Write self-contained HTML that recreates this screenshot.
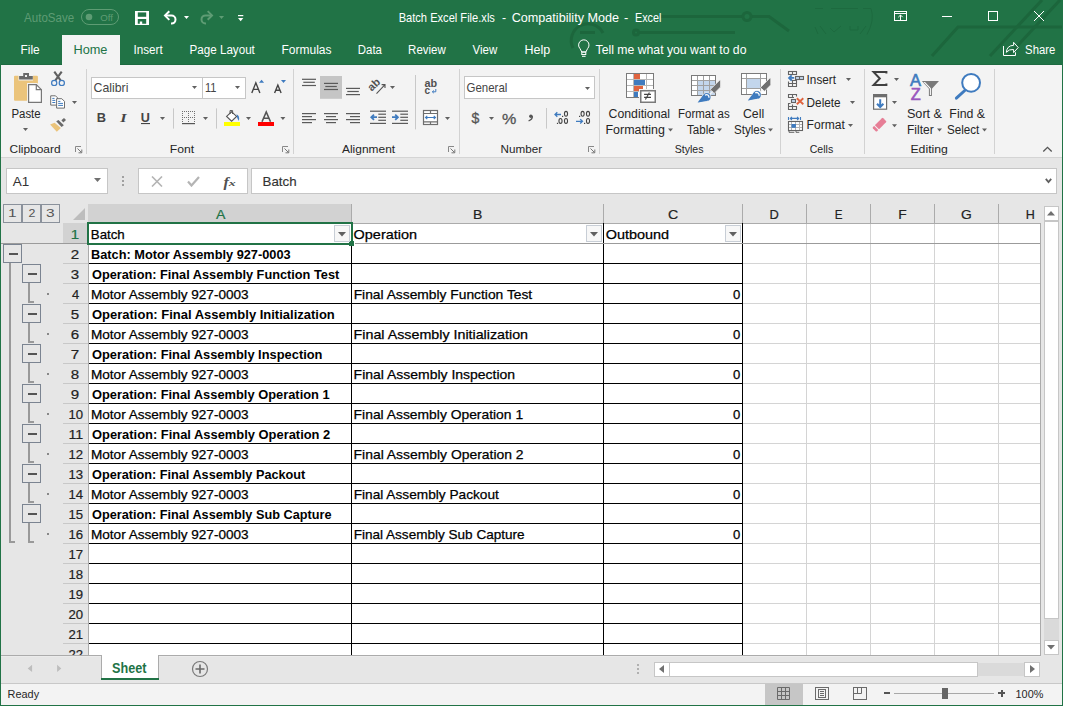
<!DOCTYPE html>
<html><head><meta charset='utf-8'><style>
html,body{margin:0;padding:0;width:1065px;height:708px;overflow:hidden;background:#fff}
#c{position:relative;width:1065px;height:708px;overflow:hidden;font-family:"Liberation Sans",sans-serif}
#c>*{position:absolute;box-sizing:content-box}
</style></head><body><div id='c'>
<div style='left:0px;top:0px;width:1065px;height:708px;background:#FFFFFF;'></div>
<div style='left:0px;top:0px;width:1063px;height:65px;background:#217346;'></div>
<div style='left:0px;top:64px;width:1063px;height:1px;background:#1D6A40;'></div>
<svg style='left:0;top:0' width='1063' height='64'><g stroke='#1C663C' fill='none' stroke-width='3'><path d='M661 16.5 H743 M751 16.5 H769 L789 31'/><circle cx='747' cy='16.5' r='4'/><path d='M639 32.5 H735'/><circle cx='636' cy='32.5' r='2.5'/><path d='M573 48 A16 16 0 0 1 603 33'/><path d='M580 32.5H595'/><path d='M932 56 L958 27 H1062'/><path d='M1042 0 L990 56'/><path d='M1060 0 L1008 56'/></g><g stroke='#1D6A3F' fill='none' stroke-width='1'><path d='M815 8.5H823M831 8.5H858M863 8.5H871Q875 20 867 34.5'/><path d='M815 27L818 34M820 26L826 34M830 28L834 32L841 26M850 26V30H858V26M866 26L860 34'/></g></svg>
<div style='left:62px;top:35px;width:58px;height:30px;background:#F3F3F3;'></div>
<div style='left:1px;top:65px;width:1061px;height:92px;background:#F3F3F3;'></div>
<div style='left:1px;top:157px;width:1061px;height:1px;background:#D4D4D4;'></div>
<div style='left:1px;top:158px;width:1061px;height:46px;background:#E6E6E6;'></div>
<div style='left:0px;top:0px;width:1px;height:706px;background:#217346;'></div>
<div style='left:1062px;top:0px;width:1px;height:706px;background:#217346;'></div>
<div style='left:0px;top:705px;width:1063px;height:1px;background:#217346;'></div>
<div style='left:6px;top:168px;width:100px;height:24px;background:#FFFFFF;border:1px solid #C6C6C6;'></div>
<svg style='left:94px;top:178px' width='8' height='5'><path d='M0 0H7L3.5 4Z' fill='#707070'/></svg>
<div style='left:122px;top:176px;width:2px;height:2px;background:#A0A0A0;'></div>
<div style='left:122px;top:180px;width:2px;height:2px;background:#A0A0A0;'></div>
<div style='left:122px;top:184px;width:2px;height:2px;background:#A0A0A0;'></div>
<div style='left:138px;top:168px;width:108px;height:24px;background:#FFFFFF;border:1px solid #C6C6C6;'></div>
<div style='left:251px;top:168px;width:804px;height:24px;background:#FFFFFF;border:1px solid #C6C6C6;'></div>
<svg style='left:151px;top:176px' width='12' height='11'><path d='M1 0.5L11 10.5M11 0.5L1 10.5' stroke='#B4B4B4' stroke-width='1.6'/></svg>
<svg style='left:187px;top:176px' width='13' height='11'><path d='M1 5.5L4.5 9.5L12 1' stroke='#B4B4B4' stroke-width='2.2' fill='none'/></svg>
<svg style='left:1045px;top:178px' width='8' height='6'><path d='M0.8 0.8L3.5 4L6.2 0.8' stroke='#606060' stroke-width='1.8' fill='none'/></svg>
<div style='left:1px;top:204px;width:1061px;height:451px;background:#E6E6E6;'></div>
<div style='left:88px;top:223px;width:952px;height:432px;background:#FFFFFF;'></div>
<div style='left:88px;top:204px;width:263px;height:18px;background:#D2D2D2;'></div>
<div style='left:63px;top:223px;width:25px;height:20px;background:#D2D2D2;'></div>
<div style='left:351px;top:204px;width:1px;height:19px;background:#ABABAB;'></div>
<div style='left:603px;top:204px;width:1px;height:19px;background:#ABABAB;'></div>
<div style='left:742px;top:204px;width:1px;height:19px;background:#ABABAB;'></div>
<div style='left:806px;top:204px;width:1px;height:19px;background:#ABABAB;'></div>
<div style='left:870px;top:204px;width:1px;height:19px;background:#ABABAB;'></div>
<div style='left:934px;top:204px;width:1px;height:19px;background:#ABABAB;'></div>
<div style='left:998px;top:204px;width:1px;height:19px;background:#ABABAB;'></div>
<div style='left:88px;top:223px;width:952px;height:1px;background:#ABABAB;'></div>
<div style='left:88px;top:223px;width:1px;height:432px;background:#ABABAB;'></div>
<div style='left:742px;top:224px;width:1px;height:431px;background:#D4D4D4;'></div>
<div style='left:806px;top:224px;width:1px;height:431px;background:#D4D4D4;'></div>
<div style='left:870px;top:224px;width:1px;height:431px;background:#D4D4D4;'></div>
<div style='left:934px;top:224px;width:1px;height:431px;background:#D4D4D4;'></div>
<div style='left:998px;top:224px;width:1px;height:431px;background:#D4D4D4;'></div>
<div style='left:89px;top:263px;width:951px;height:1px;background:#D4D4D4;'></div>
<div style='left:63px;top:263px;width:25px;height:1px;background:#C8C8C8;'></div>
<div style='left:89px;top:283px;width:951px;height:1px;background:#D4D4D4;'></div>
<div style='left:63px;top:283px;width:25px;height:1px;background:#C8C8C8;'></div>
<div style='left:89px;top:303px;width:951px;height:1px;background:#D4D4D4;'></div>
<div style='left:63px;top:303px;width:25px;height:1px;background:#C8C8C8;'></div>
<div style='left:89px;top:323px;width:951px;height:1px;background:#D4D4D4;'></div>
<div style='left:63px;top:323px;width:25px;height:1px;background:#C8C8C8;'></div>
<div style='left:89px;top:343px;width:951px;height:1px;background:#D4D4D4;'></div>
<div style='left:63px;top:343px;width:25px;height:1px;background:#C8C8C8;'></div>
<div style='left:89px;top:363px;width:951px;height:1px;background:#D4D4D4;'></div>
<div style='left:63px;top:363px;width:25px;height:1px;background:#C8C8C8;'></div>
<div style='left:89px;top:383px;width:951px;height:1px;background:#D4D4D4;'></div>
<div style='left:63px;top:383px;width:25px;height:1px;background:#C8C8C8;'></div>
<div style='left:89px;top:403px;width:951px;height:1px;background:#D4D4D4;'></div>
<div style='left:63px;top:403px;width:25px;height:1px;background:#C8C8C8;'></div>
<div style='left:89px;top:423px;width:951px;height:1px;background:#D4D4D4;'></div>
<div style='left:63px;top:423px;width:25px;height:1px;background:#C8C8C8;'></div>
<div style='left:89px;top:443px;width:951px;height:1px;background:#D4D4D4;'></div>
<div style='left:63px;top:443px;width:25px;height:1px;background:#C8C8C8;'></div>
<div style='left:89px;top:463px;width:951px;height:1px;background:#D4D4D4;'></div>
<div style='left:63px;top:463px;width:25px;height:1px;background:#C8C8C8;'></div>
<div style='left:89px;top:483px;width:951px;height:1px;background:#D4D4D4;'></div>
<div style='left:63px;top:483px;width:25px;height:1px;background:#C8C8C8;'></div>
<div style='left:89px;top:503px;width:951px;height:1px;background:#D4D4D4;'></div>
<div style='left:63px;top:503px;width:25px;height:1px;background:#C8C8C8;'></div>
<div style='left:89px;top:523px;width:951px;height:1px;background:#D4D4D4;'></div>
<div style='left:63px;top:523px;width:25px;height:1px;background:#C8C8C8;'></div>
<div style='left:89px;top:543px;width:951px;height:1px;background:#D4D4D4;'></div>
<div style='left:63px;top:543px;width:25px;height:1px;background:#C8C8C8;'></div>
<div style='left:89px;top:563px;width:951px;height:1px;background:#D4D4D4;'></div>
<div style='left:63px;top:563px;width:25px;height:1px;background:#C8C8C8;'></div>
<div style='left:89px;top:583px;width:951px;height:1px;background:#D4D4D4;'></div>
<div style='left:63px;top:583px;width:25px;height:1px;background:#C8C8C8;'></div>
<div style='left:89px;top:603px;width:951px;height:1px;background:#D4D4D4;'></div>
<div style='left:63px;top:603px;width:25px;height:1px;background:#C8C8C8;'></div>
<div style='left:89px;top:623px;width:951px;height:1px;background:#D4D4D4;'></div>
<div style='left:63px;top:623px;width:25px;height:1px;background:#C8C8C8;'></div>
<div style='left:89px;top:643px;width:951px;height:1px;background:#D4D4D4;'></div>
<div style='left:63px;top:643px;width:25px;height:1px;background:#C8C8C8;'></div>
<div style='left:89px;top:663px;width:951px;height:1px;background:#D4D4D4;'></div>
<div style='left:63px;top:663px;width:25px;height:1px;background:#C8C8C8;'></div>
<div style='left:1040px;top:223px;width:1px;height:433px;background:#ABABAB;'></div>
<div style='left:89px;top:263px;width:654px;height:1px;background:#000000;'></div>
<div style='left:89px;top:283px;width:654px;height:1px;background:#000000;'></div>
<div style='left:89px;top:303px;width:654px;height:1px;background:#000000;'></div>
<div style='left:89px;top:323px;width:654px;height:1px;background:#000000;'></div>
<div style='left:89px;top:343px;width:654px;height:1px;background:#000000;'></div>
<div style='left:89px;top:363px;width:654px;height:1px;background:#000000;'></div>
<div style='left:89px;top:383px;width:654px;height:1px;background:#000000;'></div>
<div style='left:89px;top:403px;width:654px;height:1px;background:#000000;'></div>
<div style='left:89px;top:423px;width:654px;height:1px;background:#000000;'></div>
<div style='left:89px;top:443px;width:654px;height:1px;background:#000000;'></div>
<div style='left:89px;top:463px;width:654px;height:1px;background:#000000;'></div>
<div style='left:89px;top:483px;width:654px;height:1px;background:#000000;'></div>
<div style='left:89px;top:503px;width:654px;height:1px;background:#000000;'></div>
<div style='left:89px;top:523px;width:654px;height:1px;background:#000000;'></div>
<div style='left:89px;top:543px;width:654px;height:1px;background:#000000;'></div>
<div style='left:89px;top:563px;width:654px;height:1px;background:#000000;'></div>
<div style='left:89px;top:583px;width:654px;height:1px;background:#000000;'></div>
<div style='left:89px;top:603px;width:654px;height:1px;background:#000000;'></div>
<div style='left:89px;top:623px;width:654px;height:1px;background:#000000;'></div>
<div style='left:89px;top:643px;width:654px;height:1px;background:#000000;'></div>
<div style='left:89px;top:663px;width:654px;height:1px;background:#000000;'></div>
<div style='left:351px;top:223px;width:1px;height:432px;background:#000000;'></div>
<div style='left:603px;top:223px;width:1px;height:432px;background:#000000;'></div>
<div style='left:742px;top:223px;width:1px;height:432px;background:#000000;'></div>
<div style='left:1px;top:243px;width:1039px;height:1px;background:#9B9B9B;'></div>
<div style='left:87px;top:222px;width:266px;height:2px;background:#217346;'></div>
<div style='left:87px;top:243px;width:264px;height:2px;background:#217346;'></div>
<div style='left:87px;top:222px;width:2px;height:23px;background:#217346;'></div>
<div style='left:351px;top:222px;width:2px;height:21px;background:#217346;'></div>
<div style='left:349px;top:241px;width:5px;height:5px;background:#217346;'></div>
<div style='left:354px;top:243px;width:1px;height:1px;background:#FFFFFF;'></div>
<div style='left:334px;top:225px;width:14px;height:15px;background:#F7F7F7;border:1px solid #C8CED6;'></div>
<svg style='left:338px;top:232px' width='9' height='5'><path d='M0 0H8L4 4.5Z' fill='#606060'/></svg>
<div style='left:586px;top:225px;width:14px;height:15px;background:#F7F7F7;border:1px solid #C8CED6;'></div>
<svg style='left:590px;top:232px' width='9' height='5'><path d='M0 0H8L4 4.5Z' fill='#606060'/></svg>
<div style='left:725px;top:225px;width:14px;height:15px;background:#F7F7F7;border:1px solid #C8CED6;'></div>
<svg style='left:729px;top:232px' width='9' height='5'><path d='M0 0H8L4 4.5Z' fill='#606060'/></svg>
<div style='left:1044px;top:206px;width:13px;height:13px;background:#FFFFFF;border:1px solid #C6C6C6;'></div>
<svg style='left:1047px;top:211px' width='9' height='5'><path d='M0 4.5H8L4 0Z' fill='#707070'/></svg>
<div style='left:1044px;top:221px;width:13px;height:396px;background:#FFFFFF;border:1px solid #C6C6C6;'></div>
<div style='left:1044px;top:619px;width:15px;height:21px;background:#DADADA;'></div>
<div style='left:1044px;top:640px;width:13px;height:13px;background:#FFFFFF;border:1px solid #C6C6C6;'></div>
<svg style='left:1047px;top:645px' width='9' height='5'><path d='M0 0H8L4 4.5Z' fill='#707070'/></svg>
<div style='left:3px;top:204px;width:17px;height:17px;background:#E6E6E6;border:1px solid #8A919B;'></div>
<div style='left:22px;top:204px;width:17px;height:17px;background:#E6E6E6;border:1px solid #8A919B;'></div>
<div style='left:41px;top:204px;width:17px;height:17px;background:#E6E6E6;border:1px solid #8A919B;'></div>
<svg style='left:73px;top:208px' width='13' height='13'><path d='M12 0V12H0Z' fill='#BDBDBD'/></svg>
<div style='left:3px;top:244px;width:17px;height:17px;background:#E6E6E6;border:1px solid #7B8491;'></div>
<div style='left:9px;top:253px;width:9px;height:2px;background:#555555;'></div>
<div style='left:9px;top:263px;width:2px;height:280px;background:#999999;'></div>
<div style='left:9px;top:541px;width:6px;height:2px;background:#999999;'></div>
<div style='left:22px;top:264px;width:17px;height:17px;background:#E6E6E6;border:1px solid #7B8491;'></div>
<div style='left:28px;top:273px;width:9px;height:2px;background:#555555;'></div>
<div style='left:28px;top:283px;width:2px;height:20px;background:#999999;'></div>
<div style='left:28px;top:301px;width:6px;height:2px;background:#999999;'></div>
<div style='left:47px;top:293px;width:2px;height:2px;background:#888888;'></div>
<div style='left:22px;top:304px;width:17px;height:17px;background:#E6E6E6;border:1px solid #7B8491;'></div>
<div style='left:28px;top:313px;width:9px;height:2px;background:#555555;'></div>
<div style='left:28px;top:323px;width:2px;height:20px;background:#999999;'></div>
<div style='left:28px;top:341px;width:6px;height:2px;background:#999999;'></div>
<div style='left:47px;top:333px;width:2px;height:2px;background:#888888;'></div>
<div style='left:22px;top:344px;width:17px;height:17px;background:#E6E6E6;border:1px solid #7B8491;'></div>
<div style='left:28px;top:353px;width:9px;height:2px;background:#555555;'></div>
<div style='left:28px;top:363px;width:2px;height:20px;background:#999999;'></div>
<div style='left:28px;top:381px;width:6px;height:2px;background:#999999;'></div>
<div style='left:47px;top:373px;width:2px;height:2px;background:#888888;'></div>
<div style='left:22px;top:384px;width:17px;height:17px;background:#E6E6E6;border:1px solid #7B8491;'></div>
<div style='left:28px;top:393px;width:9px;height:2px;background:#555555;'></div>
<div style='left:28px;top:403px;width:2px;height:20px;background:#999999;'></div>
<div style='left:28px;top:421px;width:6px;height:2px;background:#999999;'></div>
<div style='left:47px;top:413px;width:2px;height:2px;background:#888888;'></div>
<div style='left:22px;top:424px;width:17px;height:17px;background:#E6E6E6;border:1px solid #7B8491;'></div>
<div style='left:28px;top:433px;width:9px;height:2px;background:#555555;'></div>
<div style='left:28px;top:443px;width:2px;height:20px;background:#999999;'></div>
<div style='left:28px;top:461px;width:6px;height:2px;background:#999999;'></div>
<div style='left:47px;top:453px;width:2px;height:2px;background:#888888;'></div>
<div style='left:22px;top:464px;width:17px;height:17px;background:#E6E6E6;border:1px solid #7B8491;'></div>
<div style='left:28px;top:473px;width:9px;height:2px;background:#555555;'></div>
<div style='left:28px;top:483px;width:2px;height:20px;background:#999999;'></div>
<div style='left:28px;top:501px;width:6px;height:2px;background:#999999;'></div>
<div style='left:47px;top:493px;width:2px;height:2px;background:#888888;'></div>
<div style='left:22px;top:504px;width:17px;height:17px;background:#E6E6E6;border:1px solid #7B8491;'></div>
<div style='left:28px;top:513px;width:9px;height:2px;background:#555555;'></div>
<div style='left:28px;top:523px;width:2px;height:20px;background:#999999;'></div>
<div style='left:28px;top:541px;width:6px;height:2px;background:#999999;'></div>
<div style='left:47px;top:533px;width:2px;height:2px;background:#888888;'></div>
<div style='left:1px;top:655px;width:1061px;height:28px;background:#E6E6E6;'></div>
<div style='left:1px;top:655px;width:1040px;height:1px;background:#ABABAB;'></div>
<div style='left:1px;top:656px;width:1040px;height:1px;background:#EBEBEB;'></div>
<div style='left:101px;top:655px;width:58px;height:25px;background:#FFFFFF;'></div>
<div style='left:101px;top:655px;width:1px;height:25px;background:#ABABAB;'></div>
<div style='left:158px;top:655px;width:1px;height:25px;background:#ABABAB;'></div>
<div style='left:101px;top:678px;width:58px;height:2px;background:#217346;'></div>
<svg style='left:0px;top:656px' width='70' height='26'><path d='M32.1 8.8V16L27.7 12.4Z M57.1 8.8V16L61.3 12.4Z' fill='#BDBDBD'/></svg>
<svg style='left:191px;top:660px' width='18' height='18'><circle cx='9' cy='9' r='7.5' fill='none' stroke='#7A7A7A' stroke-width='1.2'/><path d='M9 4.5V13.5M4.5 9H13.5' stroke='#6A6A6A' stroke-width='1.6'/></svg>
<div style='left:637px;top:664px;width:2px;height:2px;background:#B0B0B0;'></div>
<div style='left:637px;top:668px;width:2px;height:2px;background:#B0B0B0;'></div>
<div style='left:637px;top:672px;width:2px;height:2px;background:#B0B0B0;'></div>
<div style='left:654px;top:662px;width:14px;height:13px;background:#FFFFFF;border:1px solid #C6C6C6;'></div>
<svg style='left:659px;top:665px' width='6' height='9'><path d='M5 0V8L0 4Z' fill='#707070'/></svg>
<div style='left:669px;top:662px;width:307px;height:13px;background:#FFFFFF;border:1px solid #C6C6C6;'></div>
<div style='left:978px;top:663px;width:47px;height:13px;background:#DADADA;'></div>
<div style='left:1024px;top:662px;width:14px;height:13px;background:#FFFFFF;border:1px solid #C6C6C6;'></div>
<svg style='left:1030px;top:665px' width='6' height='9'><path d='M0 0V8L5 4Z' fill='#707070'/></svg>
<div style='left:1px;top:683px;width:1061px;height:22px;background:#F3F3F3;'></div>
<div style='left:1px;top:683px;width:1061px;height:1px;background:#C8C8C8;'></div>
<div style='left:765px;top:684px;width:38px;height:21px;background:#C6C6C6;'></div>
<svg style='left:0;top:0' width='1065' height='708'><g fill='none' stroke='#6A6A6A' stroke-width='1'><path d='M777.5 687.5H789.5V699.5H777.5Z M781.5 687.5V699.5M785.5 687.5V699.5M777.5 691.5H789.5M777.5 695.5H789.5'/><rect x='815.5' y='687.5' width='13' height='12'/><rect x='818.5' y='689.5' width='7' height='8'/><path d='M820 691.5H824M820 693.5H824M820 695.5H824'/><rect x='853.5' y='687.5' width='13' height='12'/><path d='M857.5 687.5V693.5M861.5 687.5V693.5M853.5 693.5H861.5'/></g></svg>
<div style='left:884px;top:692px;width:6px;height:2px;background:#555555;'></div>
<div style='left:894px;top:693px;width:100px;height:1px;background:#A8A8A8;'></div>
<div style='left:942px;top:688px;width:6px;height:11px;background:#666666;'></div>
<div style='left:998px;top:692px;width:7px;height:2px;background:#555555;'></div>
<div style='left:1000.5px;top:689.5px;width:2px;height:7px;background:#555555;'></div>
<svg style='left:0;top:0' width='1065' height='708'><rect x='81.5' y='9.5' width='37' height='15' rx='7.5' fill='none' stroke='#5E9C74' stroke-width='1'/>
<circle cx='89' cy='17' r='3.3' fill='#5E9C74'/>
<path d='M135 11H149V25H135Z' fill='#fff'/><path d='M137.8 12.4H146.2V16.8H137.8Z' fill='#217346'/><path d='M137.8 18.9H146.2V23.8H142.2V21.6H139.8V23.8H137.8Z' fill='#217346'/>
<path d='M165 15.6H171.5A4 4 0 0 1 171.5 23.6H171' fill='none' stroke='#fff' stroke-width='2'/><path d='M169.3 11.3L165 15.6L169.3 19.9' fill='none' stroke='#fff' stroke-width='2'/>
<path d='M184 16H189L186.5 19Z' fill='#fff'/>
<path d='M212 15.4H205.5A4 4 0 0 0 205.5 23.4H206' fill='none' stroke='#5E9C74' stroke-width='2'/><path d='M207.7 11.1L212 15.4L207.7 19.7' fill='none' stroke='#5E9C74' stroke-width='2'/>
<path d='M219 16H224L221.5 19Z' fill='#5E9C74'/>
<rect x='238' y='15' width='5.3' height='1.2' fill='#fff'/>
<path d='M238 17.9H243.3L240.65 21.2Z' fill='#fff'/>
<g fill='none' stroke='#fff' stroke-width='1'><rect x='894.5' y='11.5' width='12' height='9'/><path d='M894.5 13.5H906.5M900.5 20.5V15M898.3 17.2L900.5 15L902.7 17.2'/><path d='M942 16.5H952'/><rect x='988.5' y='11.5' width='9' height='9'/><path d='M1034 11L1044 21M1044 11L1034 21'/></g>
<path d='M1003.5 46V55.5H1015.5V52.3' fill='none' stroke='#fff' stroke-width='1'/>
<path d='M1006.3 52.3Q1007 45.5 1013.6 45.3V42.3L1018.2 47.5L1013.6 52.6V49.5Q1009 49 1006.3 52.3Z' fill='none' stroke='#fff' stroke-width='1'/>
<g fill='none' stroke='#fff' stroke-width='1'><path d='M581.8 52L580 48.6A5.2 5.2 0 1 1 587.6 48.6L585.8 52Z'/><rect x='581.8' y='52' width='4' height='2.5'/><path d='M582 56.3H585.6'/></g>
<path d='M15 75.8H18.5V80.5H33V75.8H36.9Q37.9 75.8 37.9 76.8V83.5H28V100.7H15Q14 100.7 14 99.7V76.8Q14 75.8 15 75.8Z' fill='#EBC47B'/>
<path d='M19.1 76H23.2V73.1H29V76H32.8V79.5H19.1Z' fill='#6A6A6A'/><rect x='25' y='75' width='2' height='2' fill='#F3F3F3'/>
<path d='M28.6 84.6H36.3L41.4 89.7V102.4H28.6Z' fill='#fff' stroke='#F3F3F3' stroke-width='3'/>
<path d='M28.6 84.6H36.3L41.4 89.7V102.4H28.6Z' fill='#fff' stroke='#777' stroke-width='1.2'/><path d='M36.3 84.6V89.7H41.4' fill='none' stroke='#777' stroke-width='1.2'/>
<path d='M23 128H28L25.5 131Z' fill='#606060'/>
<path d='M54.3 71.6L60.6 80.3M61.7 71.6L55.4 80.3' stroke='#606060' stroke-width='2.1'/>
<circle cx='54.2' cy='82.9' r='2.6' fill='none' stroke='#3F7BBF' stroke-width='1.2'/><circle cx='61.8' cy='82.9' r='2.6' fill='none' stroke='#3F7BBF' stroke-width='1.2'/>
<path d='M50.7 95.8H55.5L57.5 97.8V105.1H50.7Z' fill='#fff' stroke='#6E6E6E' stroke-width='1'/>
<path d='M52.3 98.4H54.5M52.3 100.4H55.3M52.3 102.5H55.3' stroke='#3F7BBF' stroke-width='1'/>
<path d='M56.6 98.7H61.8L64.5 101.4V108.1H56.6Z' fill='#fff' stroke='#6E6E6E' stroke-width='1'/>
<path d='M58.2 101.4H60.4M58.2 103.4H63M58.2 105.4H63' stroke='#3F7BBF' stroke-width='1'/>
<path d='M72 101H77L74.5 104Z' fill='#606060'/>
<path d='M50.1 124.4L54.6 122.7L60.9 127.9L56.8 131.7Z' fill='#EBC47B'/><path d='M56.2 121.3L58.5 120L63.8 125.2L61.6 126.9Z' fill='#6A6A6A'/><path d='M61.4 120.3L64 118.1L66 120L63.3 122.5Z' fill='#6A6A6A'/>
<rect x='91.5' y='77.5' width='111' height='21' fill='#fff' stroke='#C6C6C6'/><rect x='202.5' y='77.5' width='43' height='21' fill='#fff' stroke='#C6C6C6'/>
<path d='M192 86H197L194.5 89Z' fill='#606060'/>
<path d='M235 86H240L237.5 89Z' fill='#606060'/>
<g fill='none' stroke='#444' stroke-width='1.4'><path d='M251.8 93L255.85 82.8L259.9 93M253.4 89.4H258.3'/><path d='M274.6 93L277.85 85L281.1 93M275.8 90.2H279.9'/></g>
<path d='M259 82.8L261.55 79.8L264.1 82.8Z' fill='#3F7BBF'/><path d='M281 80H286L283.5 83Z' fill='#3F7BBF'/>
<path d='M160 117H165L162.5 120Z' fill='#606060'/>
<rect x='141' y='123' width='9' height='1.1' fill='#444'/>
<line x1='173.5' y1='108.4' x2='173.5' y2='128.6' stroke='#C8C8C8'/>
<g fill='#707070'><rect x='182' y='111' width='1' height='1'/><rect x='182' y='117' width='1' height='1'/><rect x='184' y='111' width='1' height='1'/><rect x='184' y='117' width='1' height='1'/><rect x='186' y='111' width='1' height='1'/><rect x='186' y='117' width='1' height='1'/><rect x='188' y='111' width='1' height='1'/><rect x='188' y='117' width='1' height='1'/><rect x='190' y='111' width='1' height='1'/><rect x='190' y='117' width='1' height='1'/><rect x='192' y='111' width='1' height='1'/><rect x='192' y='117' width='1' height='1'/><rect x='194' y='111' width='1' height='1'/><rect x='194' y='117' width='1' height='1'/><rect x='182' y='113' width='1' height='1'/><rect x='188' y='113' width='1' height='1'/><rect x='194' y='113' width='1' height='1'/><rect x='182' y='115' width='1' height='1'/><rect x='188' y='115' width='1' height='1'/><rect x='194' y='115' width='1' height='1'/><rect x='182' y='117' width='1' height='1'/><rect x='188' y='117' width='1' height='1'/><rect x='194' y='117' width='1' height='1'/><rect x='182' y='119' width='1' height='1'/><rect x='188' y='119' width='1' height='1'/><rect x='194' y='119' width='1' height='1'/><rect x='182' y='121' width='1' height='1'/><rect x='188' y='121' width='1' height='1'/><rect x='194' y='121' width='1' height='1'/></g><rect x='182' y='123' width='13' height='1.2' fill='#555'/>
<path d='M203 117H208L205.5 120Z' fill='#606060'/>
<line x1='216.5' y1='108.4' x2='216.5' y2='128.6' stroke='#C8C8C8'/>
<path d='M226.6 116.4L231.6 111.8L236.6 116.4L231.6 121.2Z' fill='#fff' stroke='#555' stroke-width='1.1'/><path d='M230 114V110.6H232.6V114' fill='none' stroke='#555' stroke-width='1'/><path d='M236.5 114.2Q240.2 116 238.8 121Q237 119 236.5 114.2Z' fill='#3F7BBF'/>
<rect x='224' y='122' width='16' height='4' fill='#FFFF00'/>
<path d='M246 117H251L248.5 120Z' fill='#606060'/>
<path d='M262 121.7L266.25 112L270.5 121.7M263.5 118.3H269' fill='none' stroke='#555' stroke-width='1.6'/><rect x='258' y='122' width='16' height='4' fill='#FF0000'/>
<path d='M280.4 117H285.4L282.9 120Z' fill='#606060'/>
<rect x='320' y='76' width='22' height='22.8' fill='#C5C5C5'/>
<rect x='302' y='78.7' width='14' height='1.2' fill='#5A5A5A'/>
<rect x='303.3' y='81.7' width='11.5' height='1.2' fill='#5A5A5A'/>
<rect x='302' y='84.9' width='14' height='1.2' fill='#5A5A5A'/>
<rect x='324' y='82.8' width='14' height='1.2' fill='#5A5A5A'/>
<rect x='325.3' y='85.9' width='11.5' height='1.2' fill='#5A5A5A'/>
<rect x='324' y='88.9' width='14' height='1.2' fill='#5A5A5A'/>
<rect x='346' y='87.8' width='14' height='1.2' fill='#5A5A5A'/>
<rect x='347.3' y='90.9' width='11.5' height='1.2' fill='#5A5A5A'/>
<rect x='346' y='94.0' width='14' height='1.2' fill='#5A5A5A'/>
<text x='0' y='0' font-family='Liberation Sans' font-size='11' font-weight='700' fill='#505050' transform='translate(371.8,91.8) rotate(-45)'>ab</text>
<path d='M376.5 93.6L385 84.6M381.6 84.6H385V88' fill='none' stroke='#555' stroke-width='1.1'/>
<path d='M390 86H395L392.5 89Z' fill='#606060'/>
<line x1='415.5' y1='75' x2='415.5' y2='129.4' stroke='#C8C8C8'/>
<rect x='302' y='113.0' width='14' height='1.2' fill='#5A5A5A'/>
<rect x='302' y='116.0' width='10' height='1.2' fill='#5A5A5A'/>
<rect x='302' y='119.0' width='14' height='1.2' fill='#5A5A5A'/>
<rect x='302' y='122.0' width='10' height='1.2' fill='#5A5A5A'/>
<rect x='324' y='113.0' width='14' height='1.2' fill='#5A5A5A'/>
<rect x='326' y='116.0' width='10' height='1.2' fill='#5A5A5A'/>
<rect x='324' y='119.0' width='14' height='1.2' fill='#5A5A5A'/>
<rect x='326' y='122.0' width='10' height='1.2' fill='#5A5A5A'/>
<rect x='346' y='113.0' width='14' height='1.2' fill='#5A5A5A'/>
<rect x='350' y='116.0' width='10' height='1.2' fill='#5A5A5A'/>
<rect x='346' y='119.0' width='14' height='1.2' fill='#5A5A5A'/>
<rect x='350' y='122.0' width='10' height='1.2' fill='#5A5A5A'/>
<rect x='370' y='110.6' width='16' height='1.2' fill='#5A5A5A'/>
<rect x='378.3' y='113.6' width='7.699999999999989' height='1.2' fill='#5A5A5A'/>
<rect x='378.3' y='116.7' width='7.699999999999989' height='1.2' fill='#5A5A5A'/>
<rect x='378.3' y='119.7' width='7.699999999999989' height='1.2' fill='#5A5A5A'/>
<rect x='370' y='122.8' width='16' height='1.2' fill='#5A5A5A'/>
<path d='M377 117.2H371.5M374 114.6L371.3 117.2L374 119.8' fill='none' stroke='#3F7BBF' stroke-width='1.8'/>
<rect x='392' y='110.6' width='16' height='1.2' fill='#5A5A5A'/>
<rect x='400.3' y='113.6' width='7.699999999999989' height='1.2' fill='#5A5A5A'/>
<rect x='400.3' y='116.7' width='7.699999999999989' height='1.2' fill='#5A5A5A'/>
<rect x='400.3' y='119.7' width='7.699999999999989' height='1.2' fill='#5A5A5A'/>
<rect x='392' y='122.8' width='16' height='1.2' fill='#5A5A5A'/>
<path d='M392 117.2H397.7M395.2 114.6L397.9 117.2L395.2 119.8' fill='none' stroke='#3F7BBF' stroke-width='1.8'/>
<text x='424.4' y='86.9' font-family='Liberation Sans' font-size='10.5' font-weight='700' fill='#505050' textLength='12.6' lengthAdjust='spacingAndGlyphs'>ab</text><text x='424.6' y='93.9' font-family='Liberation Sans' font-size='10' font-weight='700' fill='#505050'>c</text>
<path d='M435.8 89V91.8H432.5M433.8 90.5L432.3 91.8L433.8 93.1' fill='none' stroke='#3F7BBF' stroke-width='1'/>
<rect x='423.5' y='110.5' width='14' height='14' fill='#fff' stroke='#6E6E6E' stroke-width='1.2'/><path d='M423.5 113.5H437.5M423.5 121.8H437.5M430.5 110.5V113.5M430.5 121.8V124.5' stroke='#6E6E6E' stroke-width='1.2'/>
<path d='M425.5 117.5H435.5M427.3 115.8L425.5 117.5L427.3 119.2M433.7 115.8L435.5 117.5L433.7 119.2' fill='none' stroke='#3F7BBF' stroke-width='1.1'/>
<path d='M445 117H450L447.5 120Z' fill='#606060'/>
<rect x='464.5' y='76.5' width='130' height='22' fill='#fff' stroke='#C6C6C6'/>
<path d='M585 87H590L587.5 90Z' fill='#606060'/>
<path d='M489 117H494L491.5 120Z' fill='#606060'/>
<line x1='546.5' y1='108' x2='546.5' y2='128.6' stroke='#C8C8C8'/>
<path d='M561 114.5H555M557.3 112.3L555 114.5L557.3 116.7' fill='none' stroke='#3F7BBF' stroke-width='1.3'/>
<path d='M576 121.3H582.5M580.2 119.1L582.5 121.3L580.2 123.5' fill='none' stroke='#3F7BBF' stroke-width='1.3'/>
<rect x='626.5' y='73.5' width='27' height='24' fill='#fff'/>
<rect x='634' y='74' width='6' height='5.5' fill='#E0643F'/><rect x='634' y='80' width='11' height='5.5' fill='#3F7BBF'/><rect x='634' y='86' width='9' height='5.5' fill='#E0643F'/><rect x='634' y='92' width='4' height='5.5' fill='#3F7BBF'/>
<path d='M633.5 73.5V97.5M646.5 73.5V97.5M626.5 79.5H653.5M626.5 85.5H653.5M626.5 91.5H653.5' stroke='#B8B8B8' stroke-width='1'/>
<rect x='626.5' y='73.5' width='27' height='24' fill='none' stroke='#7A7A7A' stroke-width='1'/>
<rect x='639' y='89' width='18' height='15' fill='#F3F3F3'/><rect x='640.75' y='90.75' width='14.5' height='11.5' fill='#fff' stroke='#7A7A7A' stroke-width='1.5'/>
<path d='M644.1 94.4H651M644.1 97.4H651M649.4 92.4L645.4 99.5' stroke='#444' stroke-width='1.1'/>
<rect x='691.5' y='75.5' width='24' height='20' fill='#fff'/>
<rect x='698' y='81' width='17' height='14' fill='#C3D6EC'/>
<path d='M697.5 75.5V95.5M703.5 75.5V95.5M709.5 75.5V95.5M691.5 80.5H715.5M691.5 85.5H715.5M691.5 90.5H715.5' stroke='#A0A0A0' stroke-width='1'/>
<rect x='691.5' y='75.5' width='24' height='20' fill='none' stroke='#7A7A7A' stroke-width='1'/>
<g transform='translate(0,0)'><path d='M719.6 80.2L720.6 80.2L720.6 87L714.2 93.4L710.2 89.6Z' fill='#707070' stroke='#F3F3F3' stroke-width='0.8'/><path d='M712.6 91.6L709.6 94.6' stroke='#F3F3F3' stroke-width='1.2'/><g fill='#3F7BBF' stroke='#F3F3F3' stroke-width='0.8'><circle cx='706.7' cy='97' r='4.1'/><path d='M697.7 102.6L703.5 94.5L707.6 100.9Z'/></g><g fill='#3F7BBF'><circle cx='706.7' cy='97' r='3.7'/><path d='M697.7 102.6L703.6 94.8L707.4 100.7Z'/></g><path d='M705 95.2A2.4 2.4 0 0 1 708.8 97.8' fill='none' stroke='#fff' stroke-width='1.3'/></g>
<rect x='741.5' y='73.5' width='25' height='21' fill='#fff'/>
<rect x='747' y='79' width='13' height='9' fill='#C3D6EC'/>
<path d='M746.5 73.5V94.5M760.5 73.5V94.5M741.5 78.5H766.5M741.5 88.5H766.5' stroke='#A0A0A0' stroke-width='1'/>
<rect x='741.5' y='73.5' width='25' height='21' fill='none' stroke='#7A7A7A' stroke-width='1'/>
<g transform='translate(50.2,-2.1)'><path d='M719.6 80.2L720.6 80.2L720.6 87L714.2 93.4L710.2 89.6Z' fill='#707070' stroke='#F3F3F3' stroke-width='0.8'/><path d='M712.6 91.6L709.6 94.6' stroke='#F3F3F3' stroke-width='1.2'/><g fill='#3F7BBF' stroke='#F3F3F3' stroke-width='0.8'><circle cx='706.7' cy='97' r='4.1'/><path d='M697.7 102.6L703.5 94.5L707.6 100.9Z'/></g><g fill='#3F7BBF'><circle cx='706.7' cy='97' r='3.7'/><path d='M697.7 102.6L703.6 94.8L707.4 100.7Z'/></g><path d='M705 95.2A2.4 2.4 0 0 1 708.8 97.8' fill='none' stroke='#fff' stroke-width='1.3'/></g>
<path d='M75.5 152V146.5H81' fill='none' stroke='#888' stroke-width='1'/><path d='M77.5 148.5L81.5 152.5M81.8 149.5V152.8H78.5' fill='none' stroke='#777' stroke-width='1'/>
<path d='M282.5 152V146.5H288' fill='none' stroke='#888' stroke-width='1'/><path d='M284.5 148.5L288.5 152.5M288.8 149.5V152.8H285.5' fill='none' stroke='#777' stroke-width='1'/>
<path d='M448.5 152V146.5H454' fill='none' stroke='#888' stroke-width='1'/><path d='M450.5 148.5L454.5 152.5M454.8 149.5V152.8H451.5' fill='none' stroke='#777' stroke-width='1'/>
<path d='M588.5 152V146.5H594' fill='none' stroke='#888' stroke-width='1'/><path d='M590.5 148.5L594.5 152.5M594.8 149.5V152.8H591.5' fill='none' stroke='#777' stroke-width='1'/>
<line x1='86.5' y1='69' x2='86.5' y2='154' stroke='#D2D2D2'/>
<line x1='293.5' y1='69' x2='293.5' y2='154' stroke='#D2D2D2'/>
<line x1='459.5' y1='69' x2='459.5' y2='154' stroke='#D2D2D2'/>
<line x1='599.5' y1='69' x2='599.5' y2='154' stroke='#D2D2D2'/>
<line x1='780.5' y1='69' x2='780.5' y2='154' stroke='#D2D2D2'/>
<line x1='864.5' y1='69' x2='864.5' y2='154' stroke='#D2D2D2'/>
<line x1='994.5' y1='69' x2='994.5' y2='154' stroke='#D2D2D2'/>
<path d='M846 78H851L848.5 81Z' fill='#606060'/>
<path d='M850 101H855L852.5 104Z' fill='#606060'/>
<path d='M848 124H853L850.5 127Z' fill='#606060'/>
<g fill='none' stroke='#636363' stroke-width='1.1'><rect x='788.5' y='71.5' width='8' height='3'/><path d='M792.5 71.5V74.5'/><rect x='795.5' y='76.5' width='8' height='3' fill='#C3D6EC'/><path d='M799.5 76.5V79.5'/><path d='M791.5 80.5H796.5V86.5H788.5V81.5M788.5 83.5H796.5M792.5 80.5V86.5'/></g>
<path d='M794.2 77.9H789.2M791.7 75.3L789.1 77.9L791.7 80.5' fill='none' stroke='#3F7BBF' stroke-width='1.9'/>
<g fill='none' stroke='#636363' stroke-width='1.1'><path d='M796.5 96.5V94.5H788.5V97.5H794M792.5 94.5V97.5'/><rect x='791.5' y='99.5' width='4' height='3' fill='#C3D6EC'/><path d='M790.5 103.5H788.5V109.5H796.5V106.5H788.5M792.5 104.5V109.5'/></g>
<path d='M796.8 98.3L803.3 104.2M803.3 98.3L796.8 104.2' stroke='#E0643F' stroke-width='1.9'/>
<path d='M788.5 117V120M800.5 117V120M790.3 118.4H798.7M791.9 116.8L790.3 118.4L791.9 120M797.1 116.8L798.7 118.4L797.1 120' fill='none' stroke='#3F7BBF' stroke-width='1.1'/>
<rect x='788.5' y='121.5' width='14' height='9' fill='#fff'/><path d='M791.5 121.5V130.5M795.5 121.5V130.5M799.5 121.5V130.5M788.5 124.5H802.5M788.5 127.5H802.5' stroke='#B5B5B5' stroke-width='1'/><rect x='791.5' y='124' width='4.4' height='3.8' fill='#3F7BBF'/><rect x='788.5' y='121.5' width='14' height='9' fill='none' stroke='#636363' stroke-width='1.1'/>
<path d='M789 130.5V132.3H794.3M796 130.5V132.3H799.3' fill='none' stroke='#636363' stroke-width='1'/>
<path d='M886.4 73.6V72H873.6L879.8 78.5L873.6 85H886.4V83.4' fill='none' stroke='#404040' stroke-width='2' stroke-linejoin='miter' stroke-miterlimit='6'/>
<path d='M894 78H899L896.5 81Z' fill='#606060'/>
<path d='M892 101H897L894.5 104Z' fill='#606060'/>
<path d='M892 124.2H897L894.5 127.2Z' fill='#606060'/>
<rect x='873.6' y='94.6' width='13' height='14.6' fill='#fff' stroke='#6E6E6E' stroke-width='1.2'/><rect x='873' y='94' width='14' height='3.3' fill='#6E6E6E'/>
<path d='M880.2 99.2V107M877 103.8L880.2 107L883.4 103.8' fill='none' stroke='#3F7BBF' stroke-width='2'/>
<g transform='translate(879.5,124.7) rotate(-45)'><rect x='-7.3' y='-2.9' width='14.6' height='5.8' rx='1' fill='#E67E96'/><rect x='-4.6' y='-3.5' width='1' height='7' fill='#F3F3F3'/></g>
<text x='910' y='85.9' font-family='Liberation Sans' font-size='16' font-weight='400' stroke='#3F7BBF' stroke-width='0.6' fill='#3F7BBF' textLength='11' lengthAdjust='spacingAndGlyphs'>A</text>
<text x='910.8' y='99.6' font-family='Liberation Sans' font-size='16.5' font-weight='400' stroke='#9A57BE' stroke-width='0.6' fill='#9A57BE' textLength='10' lengthAdjust='spacingAndGlyphs'>Z</text>
<path d='M921.9 81.1H939L931.9 88.8V95.9H928.9V88.8Z' fill='#7A7A7A'/><path d='M923.6 81.9H925L930.9 88.2V95H929.9V88.7Z' fill='#fff'/>
<circle cx='971.1' cy='82.8' r='8.9' fill='#fff' stroke='#3F7BBF' stroke-width='2.0'/><path d='M964.8 90.5L956.4 98.2' stroke='#3F7BBF' stroke-width='3.0' stroke-linecap='round'/>
<path d='M937 128.5H942L939.5 131.5Z' fill='#606060'/>
<path d='M982 128.5H987L984.5 131.5Z' fill='#606060'/>
<path d='M668 128.5H673L670.5 131.5Z' fill='#606060'/>
<path d='M717 128.5H722L719.5 131.5Z' fill='#606060'/>
<path d='M768 128.5H773L770.5 131.5Z' fill='#606060'/>
<path d='M1043.3 151.5L1047.5 147.3L1051.7 151.5' fill='none' stroke='#555' stroke-width='1.3'/>
<circle cx='530.9' cy='116.3' r='1.8' fill='#555'/><path d='M532.4 116.3Q532.5 119.6 528.6 120.8' fill='none' stroke='#555' stroke-width='1.3'/>
<ellipse cx='566' cy='113.85' rx='1.55' ry='2.45' fill='none' stroke='#444' stroke-width='1.1'/>
<rect x='562' y='115.8' width='1.2' height='1.2' fill='#444'/>
<ellipse cx='560.5' cy='120.95' rx='1.55' ry='2.45' fill='none' stroke='#444' stroke-width='1.1'/>
<ellipse cx='566' cy='120.95' rx='1.55' ry='2.45' fill='none' stroke='#444' stroke-width='1.1'/>
<rect x='556.9' y='122.8' width='1.2' height='1.2' fill='#444'/>
<ellipse cx='582.6' cy='113.85' rx='1.55' ry='2.45' fill='none' stroke='#444' stroke-width='1.1'/>
<ellipse cx='588' cy='113.85' rx='1.55' ry='2.45' fill='none' stroke='#444' stroke-width='1.1'/>
<rect x='579' y='115.8' width='1.2' height='1.2' fill='#444'/>
<ellipse cx='588' cy='120.95' rx='1.55' ry='2.45' fill='none' stroke='#444' stroke-width='1.1'/>
<rect x='584' y='122.8' width='1.2' height='1.2' fill='#444'/></svg>
<svg style='left:0;top:0' width='1065' height='708' font-family='Liberation Sans' xml:space='preserve'><defs><clipPath id='gridclip'><rect x='0' y='204' width='1065' height='451'/></clipPath></defs>
<text x='24.10' y='22' font-size='12.71' font-weight='400' fill='#5E9C74' textLength='50.09' lengthAdjust='spacingAndGlyphs'>AutoSave</text>
<text x='100.20' y='20.7' font-size='9.36' font-weight='400' fill='#5E9C74' textLength='12.71' lengthAdjust='spacingAndGlyphs'>Off</text>
<text x='398.66' y='22.3' font-size='13.27' font-weight='400' fill='#FFFFFF' textLength='96.25' lengthAdjust='spacingAndGlyphs'>Batch Excel File.xls</text>
<text x='502.07' y='22.3' font-size='13.3' font-weight='400' fill='#FFFFFF' textLength='4.14' lengthAdjust='spacingAndGlyphs'>-</text>
<text x='511.65' y='22.3' font-size='13.27' font-weight='400' fill='#FFFFFF' textLength='107.43' lengthAdjust='spacingAndGlyphs'>Compatibility Mode</text>
<text x='623.93' y='22.3' font-size='13.3' font-weight='400' fill='#FFFFFF' textLength='4.29' lengthAdjust='spacingAndGlyphs'>-</text>
<text x='634.99' y='22.3' font-size='13.27' font-weight='400' fill='#FFFFFF' textLength='26.38' lengthAdjust='spacingAndGlyphs'>Excel</text>
<text x='20.47' y='54.2' font-size='12.85' font-weight='400' fill='#FFFFFF' textLength='19.18' lengthAdjust='spacingAndGlyphs'>File</text>
<text x='133.59' y='54.2' font-size='12.85' font-weight='400' fill='#FFFFFF' textLength='29.12' lengthAdjust='spacingAndGlyphs'>Insert</text>
<text x='189.60' y='54.2' font-size='12.85' font-weight='400' fill='#FFFFFF' textLength='65.23' lengthAdjust='spacingAndGlyphs'>Page Layout</text>
<text x='281.47' y='54.2' font-size='12.85' font-weight='400' fill='#FFFFFF' textLength='50.03' lengthAdjust='spacingAndGlyphs'>Formulas</text>
<text x='357.81' y='54.2' font-size='12.85' font-weight='400' fill='#FFFFFF' textLength='24.11' lengthAdjust='spacingAndGlyphs'>Data</text>
<text x='408.11' y='54.2' font-size='12.85' font-weight='400' fill='#FFFFFF' textLength='37.60' lengthAdjust='spacingAndGlyphs'>Review</text>
<text x='472.60' y='54.2' font-size='12.85' font-weight='400' fill='#FFFFFF' textLength='24.75' lengthAdjust='spacingAndGlyphs'>View</text>
<text x='524.43' y='54.2' font-size='12.85' font-weight='400' fill='#FFFFFF' textLength='25.68' lengthAdjust='spacingAndGlyphs'>Help</text>
<text x='595.60' y='54.2' font-size='12.85' font-weight='400' fill='#FFFFFF' textLength='150.88' lengthAdjust='spacingAndGlyphs'>Tell me what you want to do</text>
<text x='1025.12' y='54.2' font-size='12.85' font-weight='400' fill='#FFFFFF' textLength='30.13' lengthAdjust='spacingAndGlyphs'>Share</text>
<text x='73.51' y='54.2' font-size='12.85' font-weight='400' fill='#217346' textLength='33.95' lengthAdjust='spacingAndGlyphs'>Home</text>
<text x='11.45' y='118' font-size='12.01' font-weight='400' fill='#262626' textLength='29.21' lengthAdjust='spacingAndGlyphs'>Paste</text>
<text x='9.57' y='153' font-size='11.59' font-weight='400' fill='#262626' textLength='51.01' lengthAdjust='spacingAndGlyphs'>Clipboard</text>
<text x='93.52' y='92.3' font-size='12.57' font-weight='400' fill='#444444' textLength='34.88' lengthAdjust='spacingAndGlyphs'>Calibri</text>
<text x='204.93' y='92.3' font-size='12.57' font-weight='400' fill='#444444' textLength='11.42' lengthAdjust='spacingAndGlyphs'>11</text>
<text x='169.75' y='153' font-size='11.59' font-weight='400' fill='#262626' textLength='24.44' lengthAdjust='spacingAndGlyphs'>Font</text>
<text x='342.00' y='153' font-size='11.59' font-weight='400' fill='#262626' textLength='53.12' lengthAdjust='spacingAndGlyphs'>Alignment</text>
<text x='466.49' y='92' font-size='12.57' font-weight='400' fill='#444444' textLength='40.86' lengthAdjust='spacingAndGlyphs'>General</text>
<text x='500.59' y='153' font-size='11.59' font-weight='400' fill='#262626' textLength='41.50' lengthAdjust='spacingAndGlyphs'>Number</text>
<text x='608.58' y='118' font-size='12.01' font-weight='400' fill='#262626' textLength='61.47' lengthAdjust='spacingAndGlyphs'>Conditional</text>
<text x='605.46' y='134' font-size='12.01' font-weight='400' fill='#262626' textLength='59.51' lengthAdjust='spacingAndGlyphs'>Formatting</text>
<text x='678.05' y='118' font-size='12.01' font-weight='400' fill='#262626' textLength='51.57' lengthAdjust='spacingAndGlyphs'>Format as</text>
<text x='687.00' y='134' font-size='12.01' font-weight='400' fill='#262626' textLength='27.66' lengthAdjust='spacingAndGlyphs'>Table</text>
<text x='742.97' y='118' font-size='12.01' font-weight='400' fill='#262626' textLength='21.22' lengthAdjust='spacingAndGlyphs'>Cell</text>
<text x='734.03' y='134' font-size='12.01' font-weight='400' fill='#262626' textLength='31.63' lengthAdjust='spacingAndGlyphs'>Styles</text>
<text x='674.69' y='153' font-size='11.59' font-weight='400' fill='#262626' textLength='28.80' lengthAdjust='spacingAndGlyphs'>Styles</text>
<text x='806.62' y='83.8' font-size='12.01' font-weight='400' fill='#262626' textLength='29.39' lengthAdjust='spacingAndGlyphs'>Insert</text>
<text x='806.62' y='106.6' font-size='12.01' font-weight='400' fill='#262626' textLength='34.06' lengthAdjust='spacingAndGlyphs'>Delete</text>
<text x='806.59' y='129.4' font-size='12.01' font-weight='400' fill='#262626' textLength='38.22' lengthAdjust='spacingAndGlyphs'>Format</text>
<text x='809.69' y='153' font-size='11.59' font-weight='400' fill='#262626' textLength='23.47' lengthAdjust='spacingAndGlyphs'>Cells</text>
<text x='906.95' y='118.1' font-size='12.01' font-weight='400' fill='#262626' textLength='35.13' lengthAdjust='spacingAndGlyphs'>Sort &amp;</text>
<text x='907.00' y='134' font-size='12.01' font-weight='400' fill='#262626' textLength='26.67' lengthAdjust='spacingAndGlyphs'>Filter</text>
<text x='949.37' y='118.1' font-size='12.01' font-weight='400' fill='#262626' textLength='35.71' lengthAdjust='spacingAndGlyphs'>Find &amp;</text>
<text x='947.03' y='134' font-size='12.01' font-weight='400' fill='#262626' textLength='32.32' lengthAdjust='spacingAndGlyphs'>Select</text>
<text x='910.44' y='153' font-size='11.59' font-weight='400' fill='#262626' textLength='37.49' lengthAdjust='spacingAndGlyphs'>Editing</text>
<text x='12.80' y='186.1' font-size='12.71' font-weight='400' fill='#333333' textLength='16.48' lengthAdjust='spacingAndGlyphs'>A1</text>
<text x='262.54' y='185.7' font-size='12.57' font-weight='400' fill='#333333' textLength='33.99' lengthAdjust='spacingAndGlyphs' stroke='#333333' stroke-width='0.15'>Batch</text>
<text x='223.50' y='186.8' font-size='15.36' font-weight='700' fill='#505050' textLength='5.38' lengthAdjust='spacingAndGlyphs' font-family='Liberation Serif' font-style='italic'>f</text>
<text x='228.80' y='185.5' font-size='8.38' font-weight='700' fill='#505050' textLength='6.91' lengthAdjust='spacingAndGlyphs' font-family='Liberation Serif' font-style='italic'>x</text>
<text x='8.00' y='217.4' font-size='10.34' font-weight='400' fill='#555555' textLength='8.62' lengthAdjust='spacingAndGlyphs'>1</text>
<text x='28.50' y='217.4' font-size='10.34' font-weight='400' fill='#555555' textLength='6.90' lengthAdjust='spacingAndGlyphs'>2</text>
<text x='46.00' y='217.4' font-size='10.34' font-weight='400' fill='#555555' textLength='8.62' lengthAdjust='spacingAndGlyphs'>3</text>
<text x='215.90' y='219' font-size='12.57' font-weight='400' fill='#217346' textLength='9.44' lengthAdjust='spacingAndGlyphs' stroke='#217346' stroke-width='0.2'>A</text>
<text x='472.99' y='219' font-size='12.57' font-weight='400' fill='#222222' textLength='9.35' lengthAdjust='spacingAndGlyphs' stroke='#222222' stroke-width='0.2'>B</text>
<text x='668.07' y='219' font-size='12.57' font-weight='400' fill='#222222' textLength='10.25' lengthAdjust='spacingAndGlyphs' stroke='#222222' stroke-width='0.2'>C</text>
<text x='769.48' y='219' font-size='12.57' font-weight='400' fill='#222222' textLength='9.31' lengthAdjust='spacingAndGlyphs' stroke='#222222' stroke-width='0.2'>D</text>
<text x='834.67' y='219' font-size='12.57' font-weight='400' fill='#222222' textLength='7.79' lengthAdjust='spacingAndGlyphs' stroke='#222222' stroke-width='0.2'>E</text>
<text x='898.20' y='219' font-size='12.57' font-weight='400' fill='#222222' textLength='8.46' lengthAdjust='spacingAndGlyphs' stroke='#222222' stroke-width='0.2'>F</text>
<text x='961.10' y='219' font-size='12.57' font-weight='400' fill='#222222' textLength='10.76' lengthAdjust='spacingAndGlyphs' stroke='#222222' stroke-width='0.2'>G</text>
<text x='1025.80' y='219' font-size='12.57' font-weight='400' fill='#222222' textLength='9.08' lengthAdjust='spacingAndGlyphs' stroke='#222222' stroke-width='0.2'>H</text>
<text x='70.80' y='239' font-size='12.57' font-weight='400' fill='#217346' textLength='8.40' lengthAdjust='spacingAndGlyphs' clip-path='url(#gridclip)' stroke='#217346' stroke-width='0.2'>1</text>
<text x='70.80' y='259' font-size='12.57' font-weight='400' fill='#222222' textLength='8.40' lengthAdjust='spacingAndGlyphs' clip-path='url(#gridclip)' stroke='#222222' stroke-width='0.2'>2</text>
<text x='70.80' y='279' font-size='12.57' font-weight='400' fill='#222222' textLength='8.40' lengthAdjust='spacingAndGlyphs' clip-path='url(#gridclip)' stroke='#222222' stroke-width='0.2'>3</text>
<text x='72.00' y='299' font-size='12.57' font-weight='400' fill='#222222' textLength='7.20' lengthAdjust='spacingAndGlyphs' clip-path='url(#gridclip)' stroke='#222222' stroke-width='0.2'>4</text>
<text x='70.80' y='319' font-size='12.57' font-weight='400' fill='#222222' textLength='8.40' lengthAdjust='spacingAndGlyphs' clip-path='url(#gridclip)' stroke='#222222' stroke-width='0.2'>5</text>
<text x='70.80' y='339' font-size='12.57' font-weight='400' fill='#222222' textLength='8.40' lengthAdjust='spacingAndGlyphs' clip-path='url(#gridclip)' stroke='#222222' stroke-width='0.2'>6</text>
<text x='70.80' y='359' font-size='12.57' font-weight='400' fill='#222222' textLength='8.40' lengthAdjust='spacingAndGlyphs' clip-path='url(#gridclip)' stroke='#222222' stroke-width='0.2'>7</text>
<text x='70.80' y='379' font-size='12.57' font-weight='400' fill='#222222' textLength='8.40' lengthAdjust='spacingAndGlyphs' clip-path='url(#gridclip)' stroke='#222222' stroke-width='0.2'>8</text>
<text x='70.80' y='399' font-size='12.57' font-weight='400' fill='#222222' textLength='8.40' lengthAdjust='spacingAndGlyphs' clip-path='url(#gridclip)' stroke='#222222' stroke-width='0.2'>9</text>
<text x='68.55' y='419' font-size='12.57' font-weight='400' fill='#222222' textLength='14.63' lengthAdjust='spacingAndGlyphs' clip-path='url(#gridclip)' stroke='#222222' stroke-width='0.2'>10</text>
<text x='68.47' y='439' font-size='12.57' font-weight='400' fill='#222222' textLength='14.79' lengthAdjust='spacingAndGlyphs' clip-path='url(#gridclip)' stroke='#222222' stroke-width='0.2'>11</text>
<text x='68.55' y='459' font-size='12.57' font-weight='400' fill='#222222' textLength='14.63' lengthAdjust='spacingAndGlyphs' clip-path='url(#gridclip)' stroke='#222222' stroke-width='0.2'>12</text>
<text x='68.55' y='479' font-size='12.57' font-weight='400' fill='#222222' textLength='14.63' lengthAdjust='spacingAndGlyphs' clip-path='url(#gridclip)' stroke='#222222' stroke-width='0.2'>13</text>
<text x='68.55' y='499' font-size='12.57' font-weight='400' fill='#222222' textLength='14.63' lengthAdjust='spacingAndGlyphs' clip-path='url(#gridclip)' stroke='#222222' stroke-width='0.2'>14</text>
<text x='68.55' y='519' font-size='12.57' font-weight='400' fill='#222222' textLength='14.63' lengthAdjust='spacingAndGlyphs' clip-path='url(#gridclip)' stroke='#222222' stroke-width='0.2'>15</text>
<text x='68.55' y='539' font-size='12.57' font-weight='400' fill='#222222' textLength='14.63' lengthAdjust='spacingAndGlyphs' clip-path='url(#gridclip)' stroke='#222222' stroke-width='0.2'>16</text>
<text x='68.55' y='559' font-size='12.57' font-weight='400' fill='#222222' textLength='14.63' lengthAdjust='spacingAndGlyphs' clip-path='url(#gridclip)' stroke='#222222' stroke-width='0.2'>17</text>
<text x='68.55' y='579' font-size='12.57' font-weight='400' fill='#222222' textLength='14.63' lengthAdjust='spacingAndGlyphs' clip-path='url(#gridclip)' stroke='#222222' stroke-width='0.2'>18</text>
<text x='68.55' y='599' font-size='12.57' font-weight='400' fill='#222222' textLength='14.63' lengthAdjust='spacingAndGlyphs' clip-path='url(#gridclip)' stroke='#222222' stroke-width='0.2'>19</text>
<text x='68.55' y='619' font-size='12.57' font-weight='400' fill='#222222' textLength='14.63' lengthAdjust='spacingAndGlyphs' clip-path='url(#gridclip)' stroke='#222222' stroke-width='0.2'>20</text>
<text x='68.55' y='639' font-size='12.57' font-weight='400' fill='#222222' textLength='14.63' lengthAdjust='spacingAndGlyphs' clip-path='url(#gridclip)' stroke='#222222' stroke-width='0.2'>21</text>
<text x='68.55' y='659' font-size='12.57' font-weight='400' fill='#222222' textLength='14.63' lengthAdjust='spacingAndGlyphs' clip-path='url(#gridclip)' stroke='#222222' stroke-width='0.2'>22</text>
<text x='90.79' y='239' font-size='13.13' font-weight='400' fill='#000' textLength='33.98' lengthAdjust='spacingAndGlyphs' stroke='#000' stroke-width='0.25'>Batch</text>
<text x='353.60' y='239' font-size='13.13' font-weight='400' fill='#000' textLength='63.40' lengthAdjust='spacingAndGlyphs' stroke='#000' stroke-width='0.25'>Operation</text>
<text x='605.70' y='239' font-size='13.13' font-weight='400' fill='#000' textLength='63.42' lengthAdjust='spacingAndGlyphs' stroke='#000' stroke-width='0.25'>Outbound</text>
<text x='91.03' y='259' font-size='13.13' font-weight='700' fill='#000' textLength='199.59' lengthAdjust='spacingAndGlyphs'>Batch: Motor Assembly 927-0003</text>
<text x='92.00' y='279' font-size='13.13' font-weight='700' fill='#000' textLength='247.23' lengthAdjust='spacingAndGlyphs'>Operation: Final Assembly Function Test</text>
<text x='90.97' y='299' font-size='13.13' font-weight='400' fill='#000' textLength='157.63' lengthAdjust='spacingAndGlyphs' stroke='#000' stroke-width='0.25'>Motor Assembly 927-0003</text>
<text x='353.65' y='299' font-size='13.13' font-weight='400' fill='#000' textLength='178.57' lengthAdjust='spacingAndGlyphs' stroke='#000' stroke-width='0.25'>Final Assembly Function Test</text>
<text x='733.10' y='299' font-size='13.13' font-weight='400' fill='#000' textLength='7.31' lengthAdjust='spacingAndGlyphs' stroke='#000' stroke-width='0.25'>0</text>
<text x='92.00' y='319' font-size='13.13' font-weight='700' fill='#000' textLength='242.78' lengthAdjust='spacingAndGlyphs'>Operation: Final Assembly Initialization</text>
<text x='90.97' y='339' font-size='13.13' font-weight='400' fill='#000' textLength='157.63' lengthAdjust='spacingAndGlyphs' stroke='#000' stroke-width='0.25'>Motor Assembly 927-0003</text>
<text x='353.61' y='339' font-size='13.13' font-weight='400' fill='#000' textLength='174.43' lengthAdjust='spacingAndGlyphs' stroke='#000' stroke-width='0.25'>Final Assembly Initialization</text>
<text x='733.10' y='339' font-size='13.13' font-weight='400' fill='#000' textLength='7.31' lengthAdjust='spacingAndGlyphs' stroke='#000' stroke-width='0.25'>0</text>
<text x='92.00' y='359' font-size='13.13' font-weight='700' fill='#000' textLength='230.46' lengthAdjust='spacingAndGlyphs'>Operation: Final Assembly Inspection</text>
<text x='90.97' y='379' font-size='13.13' font-weight='400' fill='#000' textLength='157.63' lengthAdjust='spacingAndGlyphs' stroke='#000' stroke-width='0.25'>Motor Assembly 927-0003</text>
<text x='353.64' y='379' font-size='13.13' font-weight='400' fill='#000' textLength='161.46' lengthAdjust='spacingAndGlyphs' stroke='#000' stroke-width='0.25'>Final Assembly Inspection</text>
<text x='733.10' y='379' font-size='13.13' font-weight='400' fill='#000' textLength='7.31' lengthAdjust='spacingAndGlyphs' stroke='#000' stroke-width='0.25'>0</text>
<text x='92.00' y='399' font-size='13.13' font-weight='700' fill='#000' textLength='237.68' lengthAdjust='spacingAndGlyphs'>Operation: Final Assembly Operation 1</text>
<text x='90.97' y='419' font-size='13.13' font-weight='400' fill='#000' textLength='157.63' lengthAdjust='spacingAndGlyphs' stroke='#000' stroke-width='0.25'>Motor Assembly 927-0003</text>
<text x='353.64' y='419' font-size='13.13' font-weight='400' fill='#000' textLength='169.48' lengthAdjust='spacingAndGlyphs' stroke='#000' stroke-width='0.25'>Final Assembly Operation 1</text>
<text x='733.10' y='419' font-size='13.13' font-weight='400' fill='#000' textLength='7.31' lengthAdjust='spacingAndGlyphs' stroke='#000' stroke-width='0.25'>0</text>
<text x='92.00' y='439' font-size='13.13' font-weight='700' fill='#000' textLength='238.28' lengthAdjust='spacingAndGlyphs'>Operation: Final Assembly Operation 2</text>
<text x='90.97' y='459' font-size='13.13' font-weight='400' fill='#000' textLength='157.63' lengthAdjust='spacingAndGlyphs' stroke='#000' stroke-width='0.25'>Motor Assembly 927-0003</text>
<text x='353.64' y='459' font-size='13.13' font-weight='400' fill='#000' textLength='169.89' lengthAdjust='spacingAndGlyphs' stroke='#000' stroke-width='0.25'>Final Assembly Operation 2</text>
<text x='733.10' y='459' font-size='13.13' font-weight='400' fill='#000' textLength='7.31' lengthAdjust='spacingAndGlyphs' stroke='#000' stroke-width='0.25'>0</text>
<text x='92.00' y='479' font-size='13.13' font-weight='700' fill='#000' textLength='213.33' lengthAdjust='spacingAndGlyphs'>Operation: Final Assembly Packout</text>
<text x='90.97' y='499' font-size='13.13' font-weight='400' fill='#000' textLength='157.63' lengthAdjust='spacingAndGlyphs' stroke='#000' stroke-width='0.25'>Motor Assembly 927-0003</text>
<text x='353.66' y='499' font-size='13.13' font-weight='400' fill='#000' textLength='145.20' lengthAdjust='spacingAndGlyphs' stroke='#000' stroke-width='0.25'>Final Assembly Packout</text>
<text x='733.10' y='499' font-size='13.13' font-weight='400' fill='#000' textLength='7.31' lengthAdjust='spacingAndGlyphs' stroke='#000' stroke-width='0.25'>0</text>
<text x='92.00' y='519' font-size='13.13' font-weight='700' fill='#000' textLength='239.47' lengthAdjust='spacingAndGlyphs'>Operation: Final Assembly Sub Capture</text>
<text x='90.97' y='539' font-size='13.13' font-weight='400' fill='#000' textLength='157.63' lengthAdjust='spacingAndGlyphs' stroke='#000' stroke-width='0.25'>Motor Assembly 927-0003</text>
<text x='353.67' y='539' font-size='13.13' font-weight='400' fill='#000' textLength='170.96' lengthAdjust='spacingAndGlyphs' stroke='#000' stroke-width='0.25'>Final Assembly Sub Capture</text>
<text x='733.10' y='539' font-size='13.13' font-weight='400' fill='#000' textLength='7.31' lengthAdjust='spacingAndGlyphs' stroke='#000' stroke-width='0.25'>0</text>
<text x='112.09' y='673.2' font-size='13.83' font-weight='700' fill='#217346' textLength='34.40' lengthAdjust='spacingAndGlyphs'>Sheet</text>
<text x='96.86' y='121.8' font-size='12.29' font-weight='700' fill='#444444' textLength='9.26' lengthAdjust='spacingAndGlyphs'>B</text>
<text x='120.20' y='121.8' font-size='12.29' font-weight='700' fill='#444444' textLength='6.31' lengthAdjust='spacingAndGlyphs' font-family='Liberation Serif' font-style='italic'>I</text>
<text x='140.77' y='121.8' font-size='12.29' font-weight='700' fill='#444444' textLength='9.13' lengthAdjust='spacingAndGlyphs'>U</text>
<text x='471.50' y='122.8' font-size='14.25' font-weight='400' fill='#555555' textLength='7.84' lengthAdjust='spacingAndGlyphs' stroke='#555555' stroke-width='0.3'>$</text>
<text x='502.13' y='123.8' font-size='15.08' font-weight='400' fill='#555555' textLength='14.32' lengthAdjust='spacingAndGlyphs' stroke='#555555' stroke-width='0.3'>%</text>
<text x='7.60' y='697.8' font-size='10.89' font-weight='400' fill='#262626' textLength='31.54' lengthAdjust='spacingAndGlyphs'>Ready</text>
<text x='1015.56' y='697.8' font-size='11.59' font-weight='400' fill='#262626' textLength='27.83' lengthAdjust='spacingAndGlyphs'>100%</text>
</svg>
</div></body></html>
